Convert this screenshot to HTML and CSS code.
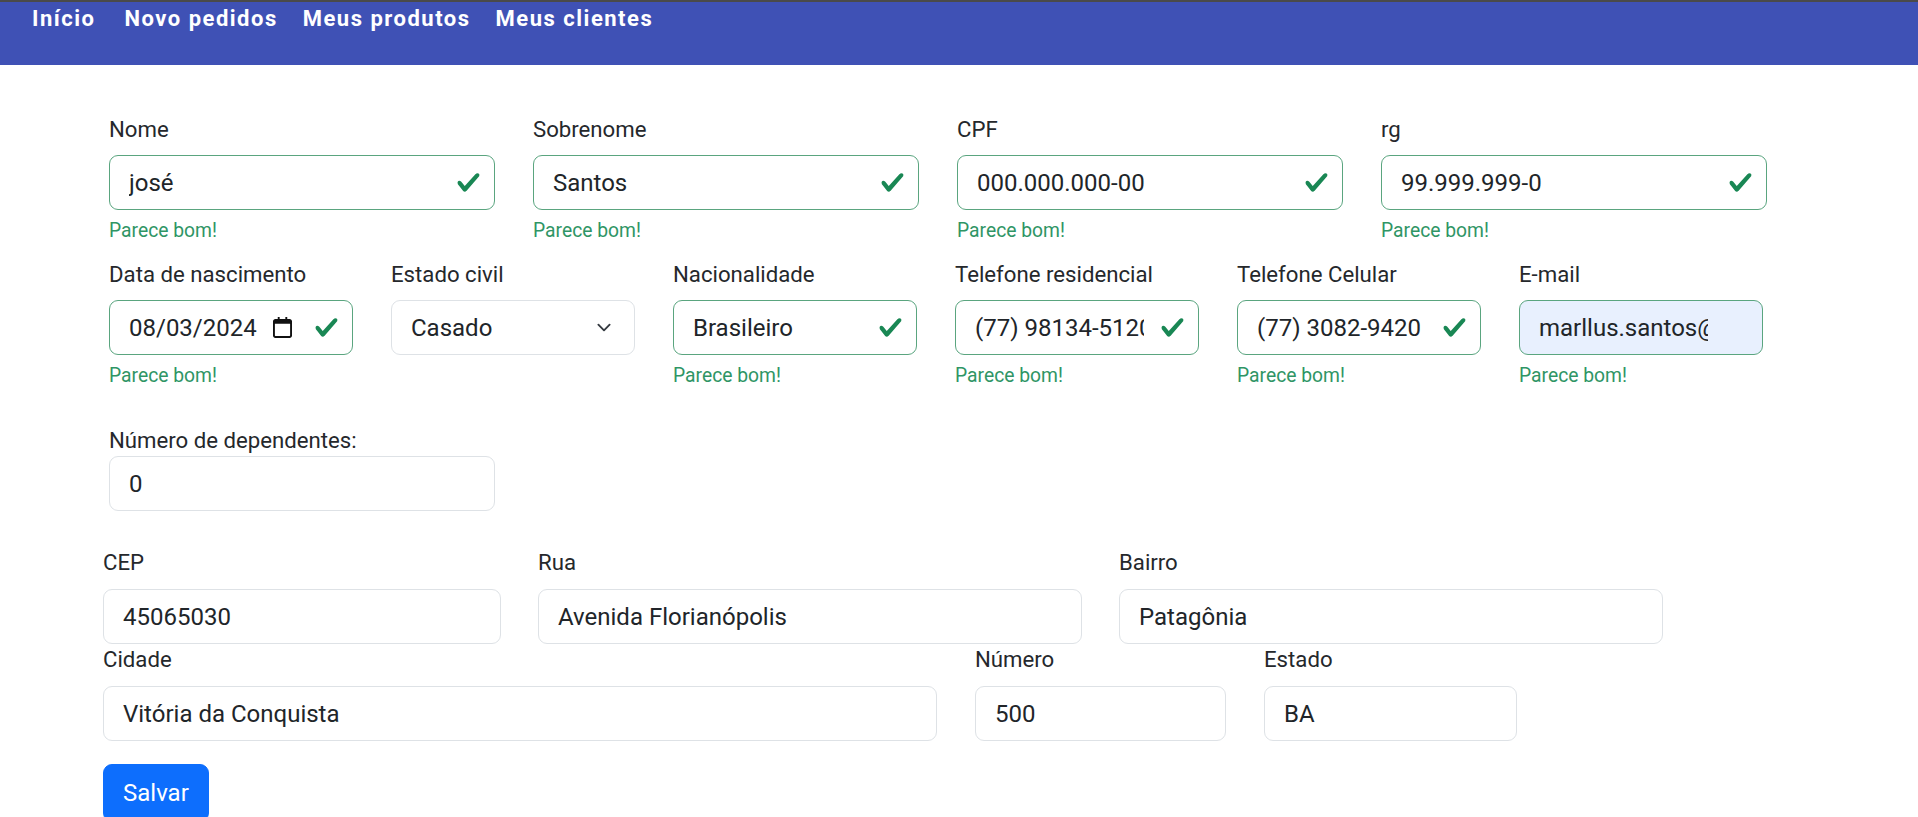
FILE: index.html
```html
<!DOCTYPE html>
<html lang="pt-BR">
<head>
<meta charset="utf-8">
<title>Cadastro de cliente</title>
<link rel="stylesheet" href="styles.css">
</head>
<body>
<header class="topbar">
  <nav class="nav">
    <a class="nav-link first" href="#">Início</a>
    <a class="nav-link" href="#">Novo pedidos</a>
    <a class="nav-link" href="#">Meus produtos</a>
    <a class="nav-link" href="#">Meus clientes</a>
  </nav>
</header>

<main class="page">
  <form class="personal">
    <div class="row row-4">
      <div class="field">
        <label class="label">Nome</label>
        <input class="control valid" type="text" value="josé">
        <div class="feedback">Parece bom!</div>
      </div>
      <div class="field">
        <label class="label">Sobrenome</label>
        <input class="control valid" type="text" value="Santos">
        <div class="feedback">Parece bom!</div>
      </div>
      <div class="field">
        <label class="label">CPF</label>
        <input class="control valid" type="text" value="000.000.000-00">
        <div class="feedback">Parece bom!</div>
      </div>
      <div class="field">
        <label class="label">rg</label>
        <input class="control valid" type="text" value="99.999.999-0">
        <div class="feedback">Parece bom!</div>
      </div>
    </div>

    <div class="row row-6">
      <div class="field">
        <label class="label">Data de nascimento</label>
        <input class="control valid date" type="text" value="08/03/2024">
        <div class="feedback">Parece bom!</div>
      </div>
      <div class="field">
        <label class="label">Estado civil</label>
        <select class="control select">
          <option>Casado</option>
          <option>Solteiro</option>
        </select>
      </div>
      <div class="field">
        <label class="label">Nacionalidade</label>
        <input class="control valid" type="text" value="Brasileiro">
        <div class="feedback">Parece bom!</div>
      </div>
      <div class="field">
        <label class="label">Telefone residencial</label>
        <input class="control valid" type="text" value="(77) 98134-5120">
        <div class="feedback">Parece bom!</div>
      </div>
      <div class="field">
        <label class="label">Telefone Celular</label>
        <input class="control valid" type="text" value="(77) 3082-9420">
        <div class="feedback">Parece bom!</div>
      </div>
      <div class="field">
        <label class="label">E-mail</label>
        <input class="control valid autofill" type="text" value="marllus.santos@gmail.com">
        <div class="feedback">Parece bom!</div>
      </div>
    </div>

    <div class="row row-1">
      <div class="field">
        <label class="label tight">Número de dependentes:</label>
        <input class="control" type="text" value="0">
      </div>
    </div>
  </form>

  <form class="address">
    <div class="row row-a">
      <div class="field">
        <label class="label addr">CEP</label>
        <input class="control" type="text" value="45065030">
      </div>
      <div class="field">
        <label class="label addr">Rua</label>
        <input class="control" type="text" value="Avenida Florianópolis">
      </div>
      <div class="field">
        <label class="label addr">Bairro</label>
        <input class="control" type="text" value="Patagônia">
      </div>
    </div>
    <div class="row row-b">
      <div class="field">
        <label class="label addr">Cidade</label>
        <input class="control" type="text" value="Vitória da Conquista">
      </div>
      <div class="field">
        <label class="label addr">Número</label>
        <input class="control" type="text" value="500">
      </div>
      <div class="field">
        <label class="label addr">Estado</label>
        <input class="control" type="text" value="BA">
      </div>
    </div>
    <button class="btn-primary" type="button">Salvar</button>
  </form>
</main>
</body>
</html>
```

FILE: styles.css
```css
* {
  box-sizing: border-box;
}

html, body {
  margin: 0;
  padding: 0;
  background: #ffffff;
  font-family: Roboto, "Liberation Sans", Arial, sans-serif;
  color: #212529;
}

.topbar {
  height: 65px;
  background: #3f51b5;
  border-top: 2px solid #4a4a4a;
}

.nav {
  display: flex;
  gap: 25px;
  padding: 4px 0 0 32px;
}

.nav-link {
  color: #ffffff;
  text-decoration: none;
  font-weight: 700;
  font-size: 22px;
  line-height: 26px;
  letter-spacing: 1.5px;
}

.nav-link.first {
  margin-right: 4px;
}

.page {
  padding-top: 49px;
}

.personal {
  margin-left: 109px;
}

.row {
  display: grid;
}

.row-4 {
  grid-template-columns: repeat(4, 386px);
  column-gap: 38px;
}

.row-6 {
  grid-template-columns: repeat(6, 244px);
  column-gap: 38px;
  margin-top: 14px;
}

.row-1 {
  grid-template-columns: 386px;
  margin-top: 35px;
}

.field {
  display: flex;
  flex-direction: column;
  min-width: 0;
}

.label {
  display: block;
  font-size: 22.2px;
  line-height: 31px;
  margin-bottom: 10px;
  color: #25282c;
  white-space: nowrap;
}

.label.tight {
  margin-bottom: 0;
}

.label.addr {
  margin-bottom: 11px;
}

.control {
  display: block;
  width: 100%;
  height: 55px;
  margin: 0;
  padding: 0 19px;
  font-family: Roboto, "Liberation Sans", Arial, sans-serif;
  font-size: 24px;
  color: #212529;
  background-color: #ffffff;
  border: 1px solid #dee2e6;
  border-radius: 9px;
  outline: none;
  appearance: none;
  -webkit-appearance: none;
}

.control.valid {
  border-color: #5aa57f;
  padding-right: 54px;
  background-image: url("data:image/svg+xml,%3csvg xmlns='http://www.w3.org/2000/svg' viewBox='0 0 8 8'%3e%3cpath fill='%23198754' d='M2.3 6.73.6 4.53c-.4-1.04.46-1.4 1.1-.8l1.1 1.4 3.4-3.8c.6-.63 1.6-.27 1.2.7l-4 4.6c-.43.5-.8.4-1.1.1z'/%3e%3c/svg%3e");
  background-repeat: no-repeat;
  background-position: right 13px center;
  background-size: 25px 25px;
}

.control.valid.date {
  padding-right: 90px;
  background-image:
    url("data:image/svg+xml,%3csvg xmlns='http://www.w3.org/2000/svg' viewBox='0 0 8 8'%3e%3cpath fill='%23198754' d='M2.3 6.73.6 4.53c-.4-1.04.46-1.4 1.1-.8l1.1 1.4 3.4-3.8c.6-.63 1.6-.27 1.2.7l-4 4.6c-.43.5-.8.4-1.1.1z'/%3e%3c/svg%3e"),
    url("data:image/svg+xml,%3csvg xmlns='http://www.w3.org/2000/svg' viewBox='0 0 20 22'%3e%3cpath fill='%23111' d='M5 0h2v2h6V0h2v2h2.5C18.9 2 20 3.1 20 4.5v15c0 1.4-1.1 2.5-2.5 2.5h-15C1.1 22 0 20.9 0 19.5v-15C0 3.1 1.1 2 2.5 2H5V0zM2 7v12.5c0 .3.2.5.5.5h15c.3 0 .5-.2.5-.5V7H2z'/%3e%3c/svg%3e");
  background-repeat: no-repeat, no-repeat;
  background-position: right 13px center, right 60px center;
  background-size: 25px 25px, 19px 21px;
}

.control.valid.autofill {
  background-color: #e8f0fe;
  background-image: none;
}

.control.select {
  padding-right: 50px;
  background-image: url("data:image/svg+xml,%3csvg xmlns='http://www.w3.org/2000/svg' viewBox='0 0 16 16'%3e%3cpath fill='none' stroke='%23343a40' stroke-linecap='round' stroke-linejoin='round' stroke-width='2' d='m2 5 6 6 6-6'/%3e%3c/svg%3e");
  background-repeat: no-repeat;
  background-position: right 20px center;
  background-size: 20px 15px;
}

.feedback {
  margin-top: 7px;
  font-size: 19.3px;
  line-height: 28px;
  color: #2f9565;
  white-space: nowrap;
}

.address {
  margin-left: 103px;
  margin-top: 36px;
}

.row-a {
  grid-template-columns: 398px 544px 544px;
  column-gap: 37px;
}

.row-b {
  grid-template-columns: 834px 251px 253px;
  column-gap: 38px;
}

.btn-primary {
  display: inline-block;
  margin-top: 23px;
  padding: 10px 19px;
  font-family: Roboto, "Liberation Sans", Arial, sans-serif;
  font-size: 24px;
  line-height: 36px;
  color: #ffffff;
  background: #0d6efd;
  border: 1px solid #0d6efd;
  border-radius: 9px;
  cursor: pointer;
}
```
